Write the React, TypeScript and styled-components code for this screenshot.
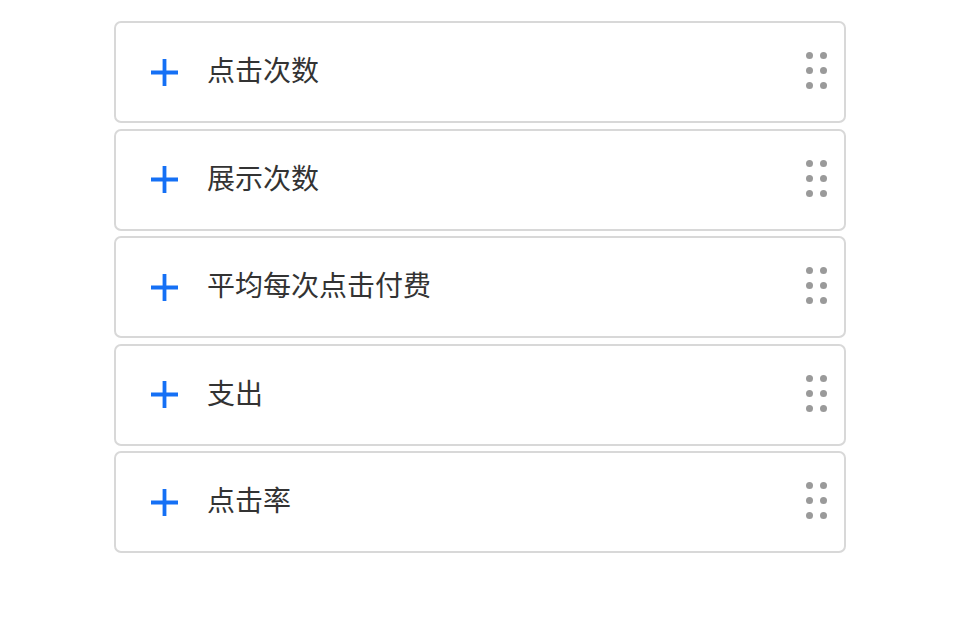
import React from 'react';
import styled, { createGlobalStyle } from 'styled-components';

const GlobalStyle = createGlobalStyle`
  body {
    margin: 0;
    background: #ffffff;
    font-family: "Noto Sans CJK SC", "Noto Sans", sans-serif;
  }
`;

const List = styled.div`
  width: 732px;
  margin: 21px 0 0 114px;
  display: flex;
  flex-direction: column;
  gap: 5.5px;
`;

const Card = styled.div`
  box-sizing: border-box;
  height: 102px;
  border: 2px solid #d8d8d8;
  border-radius: 7px;
  display: flex;
  align-items: center;
  padding: 0 17px 0 35px;
`;

const Plus = styled.svg`
  width: 27px;
  height: 27px;
  flex-shrink: 0;
`;

const Label = styled.span`
  margin: 0 0 5px 29px;
  font-size: 28px;
  line-height: 1.3;
  color: #333333;
  flex: 1;
`;

const Handle = styled.div`
  display: grid;
  grid-template-columns: repeat(2, 7px);
  grid-auto-rows: 7px;
  column-gap: 7px;
  row-gap: 8px;
  margin-bottom: 3px;
  span {
    border-radius: 50%;
    background: #9a9a9a;
  }
`;

const items = ['点击次数', '展示次数', '平均每次点击付费', '支出', '点击率'];

export default function App() {
  return (
    <>
      <GlobalStyle />
      <List>
        {items.map((t) => (
          <Card key={t}>
            <Plus viewBox="0 0 27 27">
              <path d="M13.5 0v27M0 13.5h27" stroke="#1570f5" strokeWidth="3.8" fill="none" />
            </Plus>
            <Label>{t}</Label>
            <Handle>
              {Array.from({ length: 6 }).map((_, i) => (
                <span key={i} />
              ))}
            </Handle>
          </Card>
        ))}
      </List>
    </>
  );
}
